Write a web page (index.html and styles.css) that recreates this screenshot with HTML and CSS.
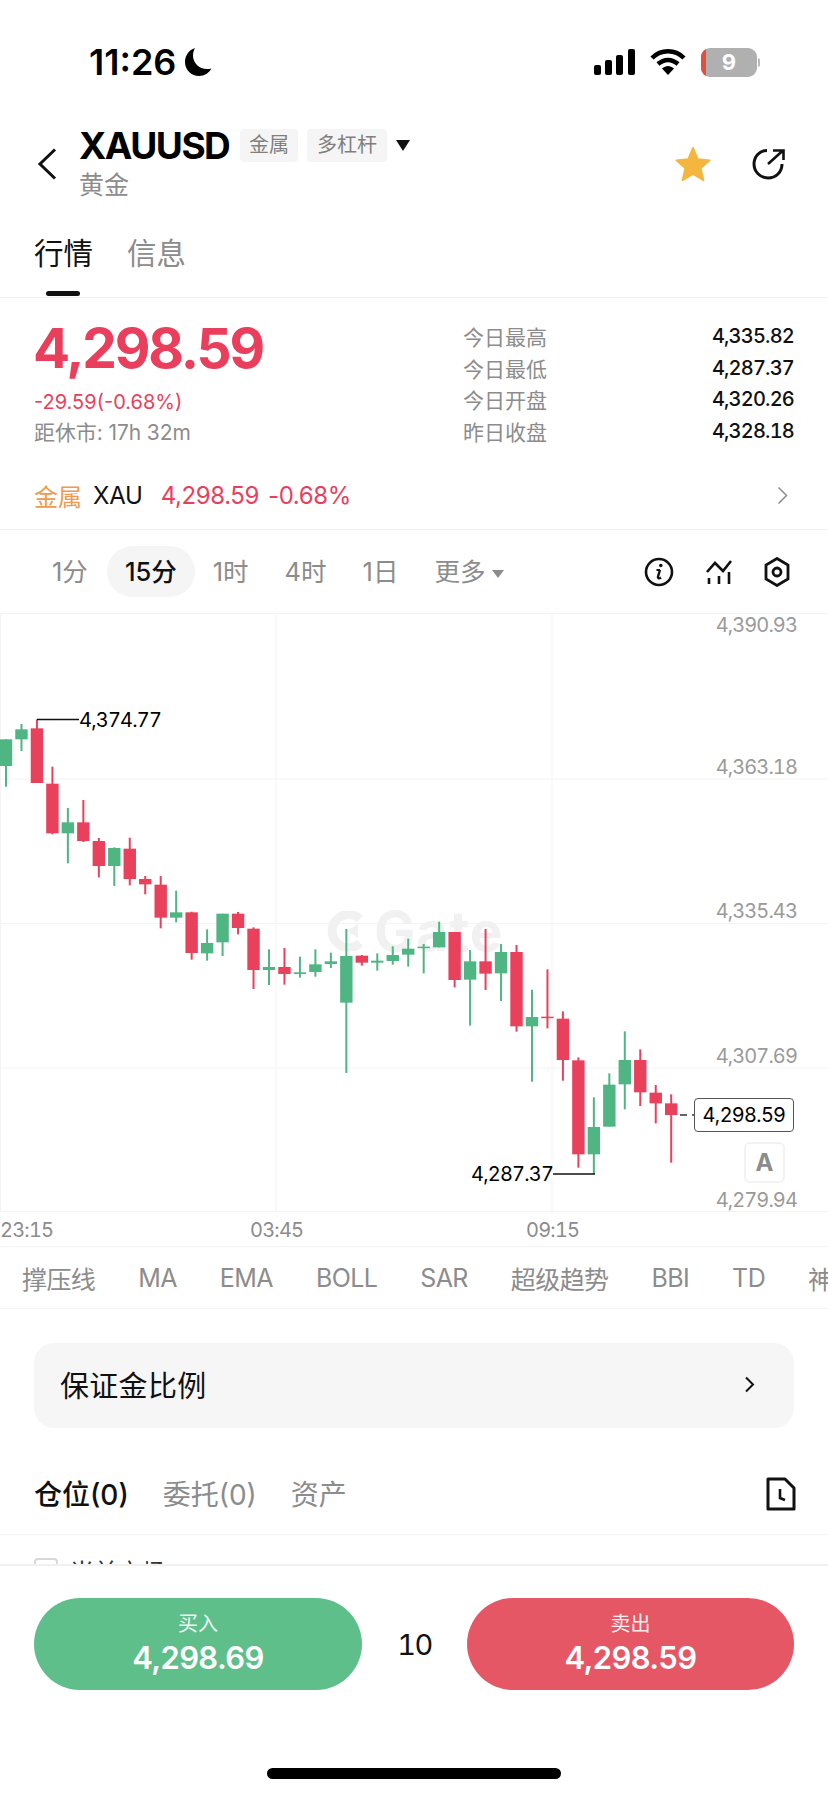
FILE: index.html
```html
<!DOCTYPE html>
<html>
<head>
    <meta charset="UTF-8">
    <title>XAUUSD</title>
    <link rel="stylesheet" href="styles.css">
</head>
<body>
    <div class="phone">
        <div class="status-bar">
            <div class="clock">
                <span>11:26</span>
                <svg class="moon" width="28" height="30" viewBox="0 0 28 30"><path d="M11 1C5 3 1 8.500 1 15c0 8 6.500 14 14 14 5.500 0 10-3 12.500-7.500C26 22 24.500 22 23 22 15 22 9 16 9 8.500 9 6 9.800 3.300 11 1z" fill="#000"/></svg>
            </div>
            <div class="status-icons">
                <svg width="42" height="26" viewBox="0 0 42 26"><rect x="0" y="16" width="7" height="10" rx="2"/><rect x="11" y="11" width="7" height="15" rx="2"/><rect x="22" y="6" width="7" height="20" rx="2"/><rect x="34" y="0" width="7" height="26" rx="2"/></svg>
                <svg width="36" height="28" viewBox="0 0 36 28"><path d="M2 10C11 1 25 1 34 10" fill="none" stroke="#000" stroke-width="4.500"/><path d="M8 16c6-5.500 14-5.500 20 0" fill="none" stroke="#000" stroke-width="4.500"/><path d="M12 20.500c4-3.500 8-3.500 12 0L18 27z" fill="#000"/></svg>
                <div class="battery"><span class="battery-low"></span><span class="battery-num">9</span></div>
                <span class="battery-nub"></span>
            </div>
        </div>

        <div class="header">
            <svg class="back" width="20" height="32" viewBox="0 0 20 32"><path d="M18 1.500L3 16l15 14.500" fill="none" stroke="#111" stroke-width="3"/></svg>
            <div class="title-block">
                <div class="title-row">
                    <span class="symbol">XAUUSD</span>
                    <span class="chip">金属</span>
                    <span class="chip chip-wide">多杠杆</span>
                    <span class="caret-down"></span>
                </div>
                <div class="subtitle">黄金</div>
            </div>
            <svg class="star" width="36" height="36" viewBox="0 0 38 38"><path d="M19 2l5 12 12.500 1.200-9.500 8.300 3 12.500L19 29.500 8 36l3-12.500-9.500-8.300L14 14z" fill="#f4b63f" stroke="#f4b63f" stroke-width="2" stroke-linejoin="round"/></svg>
            <svg class="share" width="34" height="34" viewBox="0 0 34 34"><path d="M15 3.500C7.500 3.500 2 9.500 2 17s6 14 14 14 14-6 14-14" fill="none" stroke="#111" stroke-width="3"/><path d="M16 17L31 3.500M21 3.500h10.500v9.500" fill="none" stroke="#111" stroke-width="2.600"/></svg>
        </div>

        <div class="tabs">
            <span class="tab active">行情</span>
            <span class="tab">信息</span>
        </div>

        <div class="quote">
            <div class="quote-main">
                <div class="price">4,298.59</div>
                <div class="change">-29.59(-0.68%)</div>
                <div class="countdown">距休市: 17h 32m</div>
            </div>
            <div class="quote-stats">
                <div class="stat"><span>今日最高</span><b>4,335.82</b></div>
                <div class="stat"><span>今日最低</span><b>4,287.37</b></div>
                <div class="stat"><span>今日开盘</span><b>4,320.26</b></div>
                <div class="stat"><span>昨日收盘</span><b>4,328.18</b></div>
            </div>
        </div>

        <div class="sector">
            <span class="sector-name">金属</span>
            <span class="sector-code">XAU</span>
            <span class="sector-price">4,298.59</span>
            <span class="sector-change">-0.68%</span>
            <svg class="sector-arrow" width="11" height="19" viewBox="0 0 11 19"><path d="M1.500 1.500l8 8-8 8" fill="none" stroke="#8c8c8c" stroke-width="1.500"/></svg>
        </div>

        <div class="periods">
            <span class="period">1分</span>
            <span class="period active">15分</span>
            <span class="period">1时</span>
            <span class="period">4时</span>
            <span class="period">1日</span>
            <span class="period more">更多<i class="caret-small"></i></span>
            <div class="period-tools">
                <svg width="30" height="30" viewBox="0 0 30 30"><circle cx="15" cy="15" r="13" fill="none" stroke="#111" stroke-width="2.600"/><path d="M16 13l-2 6.500c-.5 2 1 2.500 3 1" fill="none" stroke="#111" stroke-width="2.400"/><path d="M12.500 13H16" fill="none" stroke="#111" stroke-width="2"/><circle cx="16.800" cy="8.500" r="1.800" fill="#111"/></svg>
                <svg width="26" height="25" viewBox="0 0 26 25"><path d="M1 13l8-9 8 8 8-10" fill="none" stroke="#111" stroke-width="2.600"/><path d="M3 19v6M13 17v8M23 13v12" fill="none" stroke="#111" stroke-width="2.600"/></svg>
                <svg width="26" height="30" viewBox="0 0 26 30"><path d="M13 1.500l11 6.500v14l-11 6.500L2 22V8z" fill="none" stroke="#111" stroke-width="2.800"/><circle cx="13" cy="15" r="4" fill="none" stroke="#111" stroke-width="2.800"/></svg>
            </div>
        </div>

        <div class="chart" id="chart">
            <div class="watermark">
                <svg width="42" height="40" viewBox="0 0 42 40"><path d="M33 8A16.500 16.500 0 1 0 33 32" fill="none" stroke="#f1f1f1" stroke-width="9"/><path d="M20 20L31 13v14z" fill="#f1f1f1"/></svg>
                <span>Gate</span>
            </div>
            <svg class="plot" id="plot" width="828" height="600" viewBox="0 0 828 600"></svg>
            <span class="axis-label axis-1">4,390.93</span>
            <span class="axis-label axis-2">4,363.18</span>
            <span class="axis-label axis-3">4,335.43</span>
            <span class="axis-label axis-4">4,307.69</span>
            <span class="axis-label axis-5">4,279.94</span>
            <span class="mark mark-high">4,374.77</span>
            <span class="mark mark-low">4,287.37</span>
            <span class="last-price">4,298.59</span>
            <span class="auto-btn">A</span>
        </div>

        <div class="time-axis">
            <span class="time-1">23:15</span>
            <span class="time-2">03:45</span>
            <span class="time-3">09:15</span>
        </div>

        <div class="indicators">
            <span>撑压线</span><span>MA</span><span>EMA</span><span>BOLL</span><span>SAR</span><span>超级趋势</span><span>BBI</span><span>TD</span><span>神奇九转</span>
        </div>

        <div class="margin-card">
            <span>保证金比例</span>
            <svg width="11" height="17" viewBox="0 0 11 17"><path d="M2 1.500l7 7-7 7" fill="none" stroke="#111" stroke-width="2"/></svg>
        </div>

        <div class="orders-tabs">
            <span class="order-tab active">仓位(0)</span>
            <span class="order-tab">委托(0)</span>
            <span class="order-tab">资产</span>
            <svg class="history" width="30" height="34" viewBox="0 0 30 34"><path d="M2 2h17l9 9v21H2z" fill="none" stroke="#111" stroke-width="3" stroke-linejoin="round"/><path d="M14 12v9l5 2" fill="none" stroke="#111" stroke-width="2.600"/></svg>
        </div>

        <div class="current-market">
            <span class="checkbox"></span>
            <span>当前市场</span>
        </div>

        <div class="footer">
            <div class="trade-row">
                <div class="trade-btn buy"><span>买入</span><b>4,298.69</b></div>
                <div class="leverage">10</div>
                <div class="trade-btn sell"><span>卖出</span><b>4,298.59</b></div>
            </div>
            <div class="home-bar"></div>
        </div>
    </div>

    <script src="chart.js"></script>
</body>
</html>
```

FILE: styles.css
```css
* {
    box-sizing: border-box;
}

body {
    margin: 0;
    background: #fff;
    color: #111;
    font-family: Inter, 'Noto Sans CJK SC', sans-serif;
}

.phone {
    width: 828px;
    height: 1796px;
    overflow: hidden;
}

/* status bar */
.status-bar {
    height: 124px;
    padding: 0 68px 0 89px;
    display: flex;
    align-items: center;
    justify-content: space-between;
}

.clock {
    display: flex;
    align-items: center;
    gap: 8px;
    font-size: 36px;
    font-weight: 600;
    color: #000;
}

.status-icons {
    display: flex;
    align-items: center;
}

.status-icons svg + svg {
    margin-left: 14px;
}

.battery {
    position: relative;
    width: 56px;
    height: 29px;
    margin-left: 15px;
    background: #b0b0b0;
    border-radius: 9px;
    overflow: hidden;
    display: flex;
    align-items: center;
    justify-content: center;
}

.battery-low {
    position: absolute;
    left: 0;
    top: 0;
    bottom: 0;
    width: 5px;
    background: #e0503f;
}

.battery-num {
    color: #fff;
    font-size: 22px;
    font-weight: 700;
}

.battery-nub {
    width: 2px;
    height: 9px;
    margin-left: 1px;
    background: #bbb;
    border-radius: 0 2px 2px 0;
}

/* header */
.header {
    height: 80px;
    padding-left: 37px;
    display: flex;
    align-items: center;
}

.title-block {
    margin-left: 22px;
    flex: 1;
}

.title-row {
    height: 38px;
    display: flex;
    align-items: center;
}

.symbol {
    font-size: 37px;
    font-weight: 700;
    letter-spacing: -1.500px;
    color: #000;
    width: 161px;
}

.chip {
    height: 33px;
    width: 58px;
    margin-right: 9px;
    background: #f5f5f5;
    border-radius: 4px;
    color: #7f7f7f;
    font-size: 20px;
    line-height: 33px;
    text-align: center;
}

.chip-wide {
    width: 80px;
}

.caret-down {
    width: 0;
    height: 0;
    border-left: 7.5px solid transparent;
    border-right: 7.5px solid transparent;
    border-top: 11px solid #111;
}

.subtitle {
    margin-top: 3px;
    font-size: 25px;
    line-height: 34px;
    color: #8c8c8c;
}

.star {
    margin-right: 41px;
}

.share {
    margin-right: 42px;
}

/* tabs */
.tabs {
    position: relative;
    height: 94px;
    padding: 32px 0 0 34px;
    border-bottom: 1px solid #f0f0f0;
    display: flex;
    gap: 34px;
}

.tab {
    position: relative;
    height: 57px;
    font-size: 29.500px;
    line-height: 34px;
    color: #8c8c8c;
}

.tab.active {
    color: #111;
}

.tab.active::after {
    content: '';
    position: absolute;
    left: 12px;
    width: 34px;
    top: 55px;
    height: 5px;
    border-radius: 3px;
    background: #111;
}

/* quote */
.quote {
    height: 167px;
    padding: 23px 34px 0 34px;
    display: flex;
    justify-content: space-between;
}

.price {
    height: 54px;
    margin-left: -1px;
    font-size: 55px;
    line-height: 54px;
    font-weight: 700;
    letter-spacing: -2.200px;
    color: #ea3f5c;
}

.change {
    margin-top: 14px;
    font-size: 20px;
    line-height: 26px;
    color: #ea3f5c;
}

.countdown {
    margin-top: 5px;
    font-size: 21px;
    line-height: 26px;
    letter-spacing: -0.1px;
    color: #8c8c8c;
}

.quote-stats {
    width: 331px;
    margin-top: -1px;
}

.stat {
    height: 31.700px;
    display: flex;
    align-items: center;
    justify-content: space-between;
    font-size: 21px;
    color: #8c8c8c;
}

.stat b {
    font-size: 20px;
    font-weight: 500;
    font-variant-numeric: tabular-nums;
    letter-spacing: -0.8px;
    color: #111;
}

/* sector row */
.sector {
    height: 65px;
    padding: 0 40px 3px 34px;
    border-bottom: 1px solid #f0f0f0;
    display: flex;
    align-items: center;
    font-size: 24px;
    letter-spacing: -0.4px;
}

.sector-name {
    color: #ef9a4f;
    margin-right: 11px;
    letter-spacing: 0;
}

.sector-code {
    margin-right: 18px;
    letter-spacing: -0.2px;
}

.sector-price {
    color: #ea3f5c;
    margin-right: 9px;
}

.sector-change {
    color: #ea3f5c;
}

.sector-arrow {
    margin-left: auto;
}

/* timeframes */
.periods {
    height: 83px;
    padding: 0 38px 0 34px;
    display: flex;
    align-items: center;
    font-size: 25.500px;
    color: #8c8c8c;
}

.period {
    height: 51px;
    padding: 0 18px;
    line-height: 51px;
    border-radius: 26px;
    white-space: nowrap;
}

.period.active {
    margin-left: 1px;
    background: #f5f5f5;
    color: #111;
    font-weight: 500;
}

.caret-small {
    display: inline-block;
    margin-left: 7px;
    vertical-align: middle;
    border-left: 6px solid transparent;
    border-right: 6px solid transparent;
    border-top: 8px solid #8c8c8c;
}

.period-tools {
    margin-left: auto;
    display: flex;
    align-items: center;
    gap: 32px;
}

/* chart */
.chart {
    position: relative;
    height: 599px;
    overflow: hidden;
}

.plot {
    position: absolute;
    left: 0;
    top: 0;
}

.watermark {
    position: absolute;
    left: 327px;
    top: 296px;
    display: flex;
    align-items: center;
    gap: 5px;
    font-size: 55px;
    line-height: 44px;
    font-weight: 700;
    letter-spacing: 1px;
    color: #f1f1f1;
}

.axis-label {
    position: absolute;
    right: 31px;
    font-size: 20px;
    line-height: 24px;
    font-variant-numeric: tabular-nums;
    letter-spacing: -0.9px;
    color: #9a9a9a;
}

.axis-1 { top: 0; }
.axis-2 { top: 142px; }
.axis-3 { top: 286px; }
.axis-4 { top: 431px; }
.axis-5 { top: 575px; }

.mark {
    position: absolute;
    font-size: 20px;
    line-height: 24px;
    font-variant-numeric: tabular-nums;
    letter-spacing: -0.8px;
    color: #000;
}

.mark-high {
    left: 79px;
    top: 95px;
}

.mark-low {
    left: 471px;
    top: 549px;
}

.last-price {
    position: absolute;
    left: 694px;
    top: 485px;
    width: 100px;
    height: 34px;
    border: 1px solid #555;
    border-radius: 4px;
    background: #fff;
    font-size: 20px;
    line-height: 32px;
    letter-spacing: -0.2px;
    text-align: center;
    color: #000;
}

.auto-btn {
    position: absolute;
    left: 744px;
    top: 529px;
    width: 41px;
    height: 41px;
    border: 2px solid #f2f2f2;
    border-radius: 6px;
    font-size: 24px;
    line-height: 37px;
    font-weight: 700;
    text-align: center;
    color: #8c8c8c;
}

.time-axis {
    position: relative;
    height: 35px;
    border-bottom: 1px solid #f3f3f3;
    font-size: 20px;
    line-height: 37px;
    font-variant-numeric: tabular-nums;
    letter-spacing: -0.8px;
    color: #8c8c8c;
}

.time-axis span {
    position: absolute;
    top: 0;
}

.time-1 { left: 0; }
.time-2 { left: 250px; }
.time-3 { left: 526px; }

/* indicators */
.indicators {
    height: 62px;
    padding-left: 22px;
    border-bottom: 1px solid #f3f3f3;
    display: flex;
    align-items: center;
    gap: 43px;
    font-size: 25px;
    letter-spacing: -0.6px;
    color: #8c8c8c;
    white-space: nowrap;
    overflow: hidden;
}

.margin-card {
    height: 85px;
    margin: 34px 34px 0;
    padding: 0 39px 3px 26px;
    background: #f6f6f6;
    border-radius: 20px;
    display: flex;
    align-items: center;
    justify-content: space-between;
    font-size: 29px;
    letter-spacing: 0.3px;
}

/* order tabs */
.orders-tabs {
    height: 107px;
    padding: 47px 32px 0 34px;
    border-bottom: 1px solid #f3f3f3;
    display: flex;
    align-items: flex-start;
    gap: 34px;
}

.order-tab {
    font-size: 28px;
    line-height: 40px;
    color: #8c8c8c;
}

.order-tab.active {
    color: #111;
    font-weight: 500;
}

.history {
    margin-left: auto;
    margin-top: 2px;
}

.current-market {
    height: 29px;
    padding: 23px 0 0 34px;
    display: flex;
    gap: 12px;
    font-size: 24px;
    line-height: 30px;
    color: #333;
    overflow: hidden;
}

.checkbox {
    width: 24px;
    height: 24px;
    border: 2px solid #d8d8d8;
    border-radius: 4px;
}

/* footer */
.footer {
    height: 232px;
    border-top: 2px solid #f0f0f0;
    background: #fff;
}

.trade-row {
    padding: 32px 34px 0;
    display: flex;
    align-items: center;
}

.trade-btn {
    width: 328px;
    height: 92px;
    border-radius: 46px;
    color: #fff;
    display: flex;
    flex-direction: column;
    align-items: center;
    justify-content: center;
}

.trade-btn span {
    font-size: 20px;
    line-height: 28px;
    opacity: 0.9;
}

.trade-btn b {
    font-size: 31px;
    line-height: 40px;
    font-weight: 600;
    letter-spacing: -0.6px;
}

.buy {
    background: #5fbf8b;
}

.sell {
    width: 327px;
    background: #e55765;
}

.leverage {
    flex: 1;
    text-align: center;
    font-size: 29px;
    font-variant-numeric: tabular-nums;
    letter-spacing: -1.500px;
    color: #111;
}

.home-bar {
    width: 294px;
    height: 11px;
    margin: 78px auto 0;
    background: #000;
    border-radius: 6px;
}
```

FILE: chart.js
```js
// candles as [wickTop, bodyTop, bodyBottom, wickBottom, up], traced at 3x from y=690
const candles = [
    [148, 148, 228, 290, 1], [102, 118, 148, 183, 1], [88, 115, 279, 279, 0],
    [230, 281, 430, 433, 0], [354, 397, 430, 520, 1], [330, 397, 453, 456, 0],
    [444, 453, 528, 562, 0], [472, 474, 528, 588, 1], [443, 476, 567, 586, 0],
    [558, 567, 583, 613, 0], [558, 584, 683, 715, 0], [602, 667, 683, 697, 1],
    [665, 667, 789, 809, 0], [718, 759, 790, 812, 1], [671, 671, 757, 798, 1],
    [666, 671, 714, 733, 0], [712, 716, 840, 897, 0], [778, 831, 840, 885, 1],
    [774, 831, 852, 884, 0], [800, 847, 852, 863, 1], [778, 823, 846, 860, 1],
    [788, 814, 822, 834, 1], [717, 798, 938, 1149, 1], [795, 797, 818, 827, 0],
    [790, 812, 818, 842, 1], [769, 795, 813, 824, 1], [746, 776, 794, 830, 1],
    [762, 770, 774, 850, 1], [695, 726, 772, 772, 1], [726, 726, 870, 892, 0],
    [780, 814, 869, 1007, 1], [717, 814, 851, 900, 0], [762, 786, 850, 933, 1],
    [765, 786, 1009, 1025, 0], [899, 981, 1009, 1175, 1], [838, 980, 984, 1015, 0],
    [964, 986, 1110, 1172, 0], [1102, 1111, 1393, 1433, 0], [1222, 1311, 1393, 1452, 1],
    [1150, 1184, 1310, 1310, 1], [1024, 1110, 1183, 1258, 1], [1078, 1110, 1207, 1248, 0],
    [1185, 1208, 1240, 1300, 0], [1213, 1240, 1275, 1418, 0]
];

const plot = document.getElementById('plot');
const GRID = '#f3f3f3';
const RED = '#e9405b';
const GREEN = '#4fb583';

function toY(v) {
    return 77 + v / 3;
}

function addShape(tag, attrs) {
    const el = document.createElementNS('http://www.w3.org/2000/svg', tag);
    Object.keys(attrs).forEach(key => el.setAttribute(key, attrs[key]));
    plot.appendChild(el);
}

function addLine(x1, y1, x2, y2, color, width) {
    addShape('line', { x1, y1, x2, y2, stroke: color, 'stroke-width': width });
}

// grid
[0.5, 166, 310.5, 455, 598.5].forEach(y => addLine(0, y, 828, y, GRID, 1));
[0.5, 276, 552].forEach(x => addLine(x, 0, x, 599, GRID, 1));

candles.forEach((c, i) => {
    const x = 6 + 15.47 * i;
    const color = c[4] ? GREEN : RED;
    addLine(x, toY(c[0]), x, toY(c[3]), color, 2);
    addShape('rect', {
        x: x - 6.2,
        y: toY(c[1]),
        width: 12.4,
        height: Math.max(toY(c[2]) - toY(c[1]), 1.5),
        fill: color
    });
});

// high / low markers
addLine(37, 106.5, 79, 106.5, '#111', 1.5);
addLine(553, 561, 595, 561, '#111', 1.5);

// last price leader
addLine(680, 502, 687, 502, '#333', 1.5);
addLine(692, 502, 694, 502, '#333', 1.5);
```
